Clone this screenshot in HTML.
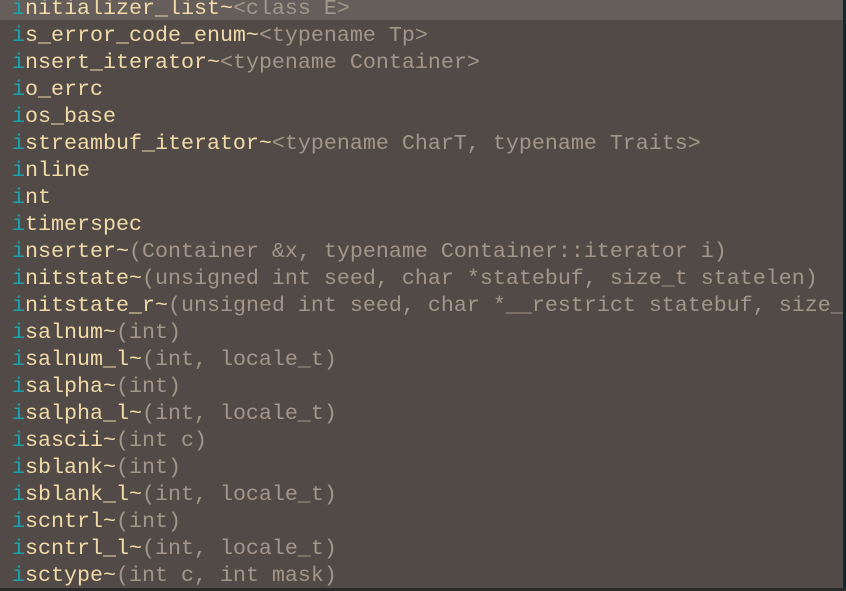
<!DOCTYPE html>
<html><head><style>
html,body{margin:0;padding:0;}
body{width:846px;height:591px;background:#2a2a2a;overflow:hidden;position:relative;font-family:"Liberation Mono","DejaVu Sans Mono",monospace;}
#p{position:absolute;left:0;top:0;width:843px;height:588px;background:#524a46;overflow:hidden;}
#sel{position:absolute;left:0;top:0;width:843px;height:20px;background:#655e5a;}
#edge{position:absolute;left:843px;top:0;width:3px;height:588px;background:#0b2a33;}
#t{position:absolute;left:0;top:-5px;}
.r{width:843px;height:27px;line-height:27px;font-size:21.67px;white-space:pre;color:#f0dba9;padding-left:12px;box-sizing:border-box;}
.m{color:#18a3b3;}
.g{color:#a3968a;}
</style></head><body>
<div id="p">
<div id="sel"></div>
<div id="t">
<div class="r"><span class="m">i</span>nitializer_list~<span class="g">&lt;class E&gt;</span></div>
<div class="r"><span class="m">i</span>s_error_code_enum~<span class="g">&lt;typename Tp&gt;</span></div>
<div class="r"><span class="m">i</span>nsert_iterator~<span class="g">&lt;typename Container&gt;</span></div>
<div class="r"><span class="m">i</span>o_errc</div>
<div class="r"><span class="m">i</span>os_base</div>
<div class="r"><span class="m">i</span>streambuf_iterator~<span class="g">&lt;typename CharT, typename Traits&gt;</span></div>
<div class="r"><span class="m">i</span>nline</div>
<div class="r"><span class="m">i</span>nt</div>
<div class="r"><span class="m">i</span>timerspec</div>
<div class="r"><span class="m">i</span>nserter~<span class="g">(Container &amp;x, typename Container::iterator i)</span></div>
<div class="r"><span class="m">i</span>nitstate~<span class="g">(unsigned int seed, char *statebuf, size_t statelen)</span></div>
<div class="r"><span class="m">i</span>nitstate_r~<span class="g">(unsigned int seed, char *__restrict statebuf, size_t statelen)</span></div>
<div class="r"><span class="m">i</span>salnum~<span class="g">(int)</span></div>
<div class="r"><span class="m">i</span>salnum_l~<span class="g">(int, locale_t)</span></div>
<div class="r"><span class="m">i</span>salpha~<span class="g">(int)</span></div>
<div class="r"><span class="m">i</span>salpha_l~<span class="g">(int, locale_t)</span></div>
<div class="r"><span class="m">i</span>sascii~<span class="g">(int c)</span></div>
<div class="r"><span class="m">i</span>sblank~<span class="g">(int)</span></div>
<div class="r"><span class="m">i</span>sblank_l~<span class="g">(int, locale_t)</span></div>
<div class="r"><span class="m">i</span>scntrl~<span class="g">(int)</span></div>
<div class="r"><span class="m">i</span>scntrl_l~<span class="g">(int, locale_t)</span></div>
<div class="r"><span class="m">i</span>sctype~<span class="g">(int c, int mask)</span></div>
</div>
</div>
<div id="edge"></div>
</body></html>
